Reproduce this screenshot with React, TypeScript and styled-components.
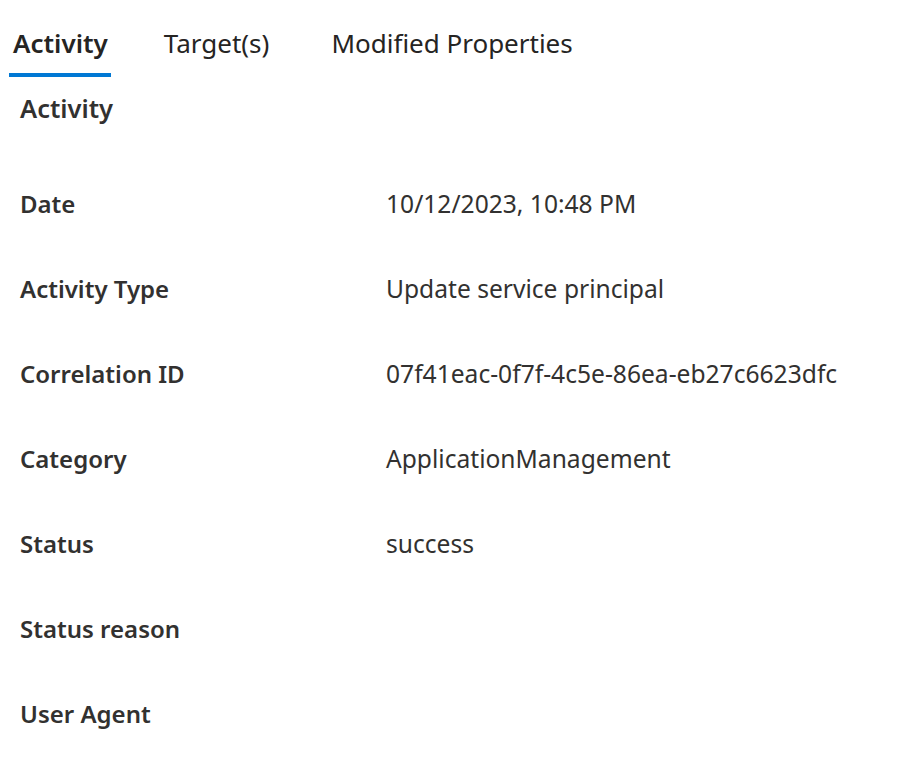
import React from "react";
import styled, { createGlobalStyle } from "styled-components";

const Global = createGlobalStyle`
  html, body { margin: 0; padding: 0; background: #ffffff; }
  body { font-family: "Noto Sans", "Open Sans", sans-serif; color: #323130; }
`;

const Page = styled.div`
  width: 902px;
  height: 762px;
  overflow: hidden;
`;

const TabBar = styled.div`
  display: flex;
  align-items: stretch;
  padding-left: 9px;
  padding-top: 22px;
`;

const Tab = styled.div<{ $active?: boolean }>`
  position: relative;
  padding: 0 3px 0 4px;
  margin-right: ${(p) => (p.$active ? "49px" : "55px")};
  height: 55px;
  font-size: 26px;
  line-height: 42px;
  font-weight: ${(p) => (p.$active ? 600 : 400)};
  color: #252423;
  border-bottom: 4px solid ${(p) => (p.$active ? "#0078d4" : "transparent")};
  box-sizing: border-box;
`;

const Section = styled.div`
  padding-left: 20px;
`;

const Heading = styled.h2`
  margin: 0;
  padding-top: 14px;
  font-size: 25.5px;
  line-height: 34px;
  font-weight: 600;
  color: #323130;
`;

const List = styled.div`
  display: flex;
  flex-direction: column;
  margin-top: 62px;
`;

const Row = styled.div`
  display: grid;
  grid-template-columns: 366px 1fr;
  height: 85px;
  line-height: 34px;
`;

const Label = styled.div`
  font-size: 24px;
  font-weight: 600;
  color: #323130;
`;

const Value = styled.div`
  font-size: 24.6px;
  color: #323130;
`;

const rows: [string, string][] = [
  ["Date", "10/12/2023, 10:48 PM"],
  ["Activity Type", "Update service principal"],
  ["Correlation ID", "07f41eac-0f7f-4c5e-86ea-eb27c6623dfc"],
  ["Category", "ApplicationManagement"],
  ["Status", "success"],
  ["Status reason", ""],
  ["User Agent", ""],
];

export default function App() {
  return (
    <Page>
      <Global />
      <TabBar>
        <Tab $active>Activity</Tab>
        <Tab>Target(s)</Tab>
        <Tab>Modified Properties</Tab>
      </TabBar>
      <Section>
        <Heading>Activity</Heading>
        <List>
          {rows.map(([l, v]) => (
            <Row key={l}>
              <Label>{l}</Label>
              <Value>{v}</Value>
            </Row>
          ))}
        </List>
      </Section>
    </Page>
  );
}
